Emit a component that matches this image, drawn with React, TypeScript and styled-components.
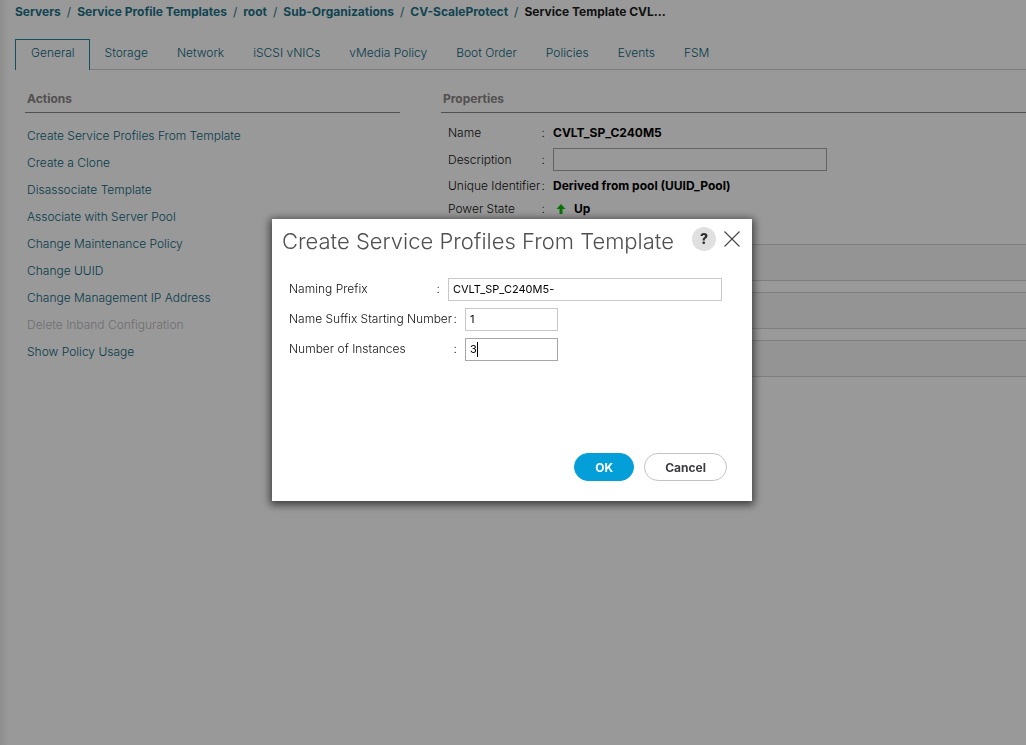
import React from "react";
import styled, { createGlobalStyle } from "styled-components";

const GlobalStyle = createGlobalStyle`
  *, *::before, *::after { box-sizing: border-box; }
  body {
    margin: 0;
    background: #ffffff;
    color: #111111;
    font: 300 12px/16px Inter, "Liberation Sans", sans-serif;
  }
  input, button { font-family: inherit; }
`;

const Page = styled.div`
  min-height: 100vh;
  padding-left: 15px;
  background: linear-gradient(to right, #ececec, #ffffff 8px);
`;

const Breadcrumbs = styled.nav`
  display: flex;
  gap: 6px;
  line-height: 24px;
  font-weight: 700;
  color: #1b7288;
  white-space: nowrap;
`;

const Crumb = styled.a`
  color: inherit;
  text-decoration: none;
`;

const Slash = styled.span`
  font-weight: 400;
`;

const CurrentCrumb = styled.span`
  color: #1c1c1c;
`;

const TabList = styled.div`
  display: flex;
  margin-top: 15px;

  &::after {
    content: "";
    flex: 1;
    border-bottom: 1px solid #d0d0d0;
  }
`;

const Tab = styled.button<{ $active?: boolean }>`
  height: 31px;
  padding: 0 14px ${(p) => (p.$active ? 5 : 3)}px 15px;
  border: 0 solid ${(p) => (p.$active ? "#1b86a4" : "#d0d0d0")};
  border-width: ${(p) => (p.$active ? "1px 1px 0" : "0 0 1px")};
  background: none;
  color: #0b657c;
  font-size: 12px;
  font-weight: 300;
  line-height: 16px;
  white-space: nowrap;
`;

const Columns = styled.main`
  display: grid;
  grid-template-columns: 25fr 39fr;
  column-gap: 41px;
  padding: 21px 0 0 10px;
`;

const Section = styled.section`
  min-width: 0;
`;

const SectionTitle = styled.h2`
  margin: 0;
  padding: 0 2px 5px;
  border-bottom: 1px solid #858585;
  color: #8a8585;
  font-size: 12px;
  font-weight: 700;
  line-height: 16px;
`;

const ActionList = styled.ul`
  margin: 9px 0 0;
  padding: 0 2px;
  list-style: none;
  line-height: 27px;
`;

const Action = styled.a<{ $disabled?: boolean }>`
  color: ${(p) => (p.$disabled ? "#b8b8b8" : "#0b657c")};
  text-decoration: none;
`;

const PropertyList = styled.div`
  display: grid;
  grid-template-rows: 25px 29px 23px 23px;
  align-items: center;
  padding: 7px 0 0 7px;
`;

const Property = styled.div`
  display: flex;
  align-items: center;
  gap: 8px;
`;

const PropertyLabel = styled.label`
  display: flex;
  justify-content: space-between;
  width: 97px;
  white-space: nowrap;
`;

const PropertyValue = styled.span`
  display: flex;
  align-items: center;
  gap: 8px;
  color: #000000;
  font-weight: 700;
`;

const TextBox = styled.input<{ $wide?: boolean; $active?: boolean }>`
  width: ${(p) => (p.$wide ? 274 : 93)}px;
  height: 23px;
  padding: 0 4px 1px;
  border: 1px solid ${(p) => (p.$active ? "#a6a6a6" : "#c8c8c8")};
  border-radius: 0;
  outline: none;
  background: transparent;
  color: #000000;
  font-size: 11px;
`;

const Panels = styled.div`
  display: grid;
  gap: 11px;
  margin-top: 24px;
`;

const Panel = styled.div`
  height: 37px;
  border: 1px solid #d2d2d2;
  border-right: 0;
  background: #f7f7f7;
`;

const Overlay = styled.div`
  position: fixed;
  inset: 0;
  display: flex;
  align-items: flex-start;
  justify-content: center;
  padding: 219px 16px 0 14px;
  background: rgba(0, 0, 0, 0.4);
`;

const Dialog = styled.form`
  display: flex;
  flex-direction: column;
  width: 480px;
  min-height: 282px;
  background: #ffffff;
  box-shadow: 0 2px 8px 2px rgba(0, 0, 0, 0.6);
`;

const DialogHeader = styled.header`
  display: flex;
  align-items: center;
  gap: 8px;
  padding: 6px 12px 2px 10px;
`;

const DialogTitle = styled.h1`
  flex: 1;
  margin: 0;
  padding-top: 4px;
  color: #505050;
  font-size: 22px;
  font-weight: 300;
  line-height: 24px;
  white-space: nowrap;
`;

const HelpButton = styled.button`
  width: 24px;
  height: 24px;
  padding: 0;
  border: 0;
  border-radius: 50%;
  background: #e0e0e0;
  color: #2f2f2f;
  font-size: 14px;
  font-weight: 800;
  line-height: 24px;
`;

const CloseButton = styled.button`
  display: flex;
  padding: 0;
  border: 0;
  background: none;
`;

const Fields = styled.div`
  display: grid;
  gap: 7px;
  padding: 23px 17px 0;
`;

const Field = styled.div`
  display: flex;
  align-items: center;
  gap: 8px;
`;

const FieldLabel = styled.label<{ $wide?: boolean }>`
  display: flex;
  justify-content: space-between;
  width: ${(p) => (p.$wide ? 168 : 151)}px;
  padding-bottom: 2px;
  white-space: nowrap;
`;

const CaretBox = styled.span`
  position: relative;
  display: flex;
`;

const Caret = styled.span`
  position: absolute;
  left: 12px;
  top: 4px;
  width: 1px;
  height: 15px;
  background: #000000;
`;

const DialogFooter = styled.footer`
  display: flex;
  justify-content: flex-end;
  gap: 10px;
  margin-top: auto;
  padding: 0 25px 20px;
`;

const PillButton = styled.button<{ $primary?: boolean }>`
  height: 28px;
  padding: 0 20px;
  border: 1px solid ${(p) => (p.$primary ? "#049fd9" : "#c4c4c4")};
  border-radius: 14px;
  background: ${(p) => (p.$primary ? "#049fd9" : "#ffffff")};
  color: ${(p) => (p.$primary ? "#ffffff" : "#3c3c40")};
  font-size: 12px;
  font-weight: 700;
`;

const crumbs = ["Servers", "Service Profile Templates", "root", "Sub-Organizations", "CV-ScaleProtect"];
const tabs = ["General", "Storage", "Network", "iSCSI vNICs", "vMedia Policy", "Boot Order", "Policies", "Events", "FSM"];
const actions = [
  "Create Service Profiles From Template",
  "Create a Clone",
  "Disassociate Template",
  "Associate with Server Pool",
  "Change Maintenance Policy",
  "Change UUID",
  "Change Management IP Address",
  "Delete Inband Configuration",
  "Show Policy Usage",
];

export default function App() {
  return (
    <>
      <GlobalStyle />
      <Page>
        <Breadcrumbs aria-label="Breadcrumb">
          {crumbs.map((name) => (
            <React.Fragment key={name}>
              <Crumb href="#">{name}</Crumb>
              <Slash>/</Slash>
            </React.Fragment>
          ))}
          <CurrentCrumb>Service Template CVL...</CurrentCrumb>
        </Breadcrumbs>
        <TabList role="tablist">
          {tabs.map((name, i) => (
            <Tab key={name} type="button" role="tab" aria-selected={i === 0} $active={i === 0}>
              {name}
            </Tab>
          ))}
        </TabList>
        <Columns>
          <Section>
            <SectionTitle>Actions</SectionTitle>
            <ActionList>
              {actions.map((name) => (
                <li key={name}>
                  <Action href="#" $disabled={name.startsWith("Delete")}>{name}</Action>
                </li>
              ))}
            </ActionList>
          </Section>
          <Section>
            <SectionTitle>Properties</SectionTitle>
            <PropertyList>
              <Property>
                <PropertyLabel as="span"><span>Name</span><span>:</span></PropertyLabel>
                <PropertyValue>CVLT_SP_C240M5</PropertyValue>
              </Property>
              <Property>
                <PropertyLabel htmlFor="description"><span>Description</span><span>:</span></PropertyLabel>
                <TextBox id="description" $wide $active />
              </Property>
              <Property>
                <PropertyLabel as="span"><span>Unique Identifier</span><span>:</span></PropertyLabel>
                <PropertyValue>Derived from pool (UUID_Pool)</PropertyValue>
              </Property>
              <Property>
                <PropertyLabel as="span"><span>Power State</span><span>:</span></PropertyLabel>
                <PropertyValue>
                  <svg width="13" height="12" viewBox="0 0 13 12" aria-hidden="true">
                    <path d="M8 1 L12.500 6 H9.500 V11 H6.500 V6 H3.500 Z" fill="#0cc00c" />
                  </svg>
                  Up
                </PropertyValue>
              </Property>
            </PropertyList>
            <Panels>
              <Panel />
              <Panel />
              <Panel />
            </Panels>
          </Section>
        </Columns>
      </Page>
      <Overlay>
        <Dialog role="dialog" aria-labelledby="dialog-title" onSubmit={(e) => e.preventDefault()}>
          <DialogHeader>
            <DialogTitle id="dialog-title">Create Service Profiles From Template</DialogTitle>
            <HelpButton type="button" aria-label="Help">?</HelpButton>
            <CloseButton type="button" aria-label="Close">
              <svg width="16" height="16" viewBox="0 0 16 16" aria-hidden="true">
                <path d="M.5 .5 L15.500 15.500 M15.500 .5 L.5 15.500" stroke="#444444" strokeWidth="1.100" />
              </svg>
            </CloseButton>
          </DialogHeader>
          <Fields>
            <Field>
              <FieldLabel htmlFor="prefix"><span>Naming Prefix</span><span>:</span></FieldLabel>
              <TextBox id="prefix" $wide defaultValue="CVLT_SP_C240M5-" />
            </Field>
            <Field>
              <FieldLabel htmlFor="suffix" $wide><span>Name Suffix Starting Number</span><span>:</span></FieldLabel>
              <TextBox id="suffix" defaultValue="1" />
            </Field>
            <Field>
              <FieldLabel htmlFor="instances" $wide><span>Number of Instances</span><span>:</span></FieldLabel>
              <CaretBox>
                <TextBox id="instances" $active defaultValue="3" />
                <Caret />
              </CaretBox>
            </Field>
          </Fields>
          <DialogFooter>
            <PillButton type="submit" $primary>OK</PillButton>
            <PillButton type="button">Cancel</PillButton>
          </DialogFooter>
        </Dialog>
      </Overlay>
    </>
  );
}
